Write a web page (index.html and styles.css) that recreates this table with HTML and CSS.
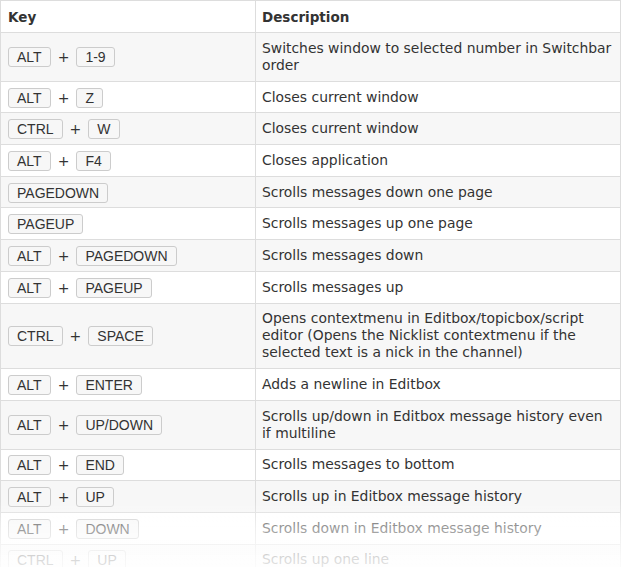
FILE: index.html
```html
<!DOCTYPE html>
<html>
<head>
<meta charset="utf-8">
<link rel="stylesheet" href="styles.css">
</head>
<body>
<table class="keys">
  <thead>
    <tr><th class="col-key">Key</th><th>Description</th></tr>
  </thead>
  <tbody>
    <tr><td><div class="combo"><kbd>ALT</kbd><span class="plus">+</span><kbd>1-9</kbd></div></td><td>Switches window to selected number in Switchbar order</td></tr>
    <tr><td><div class="combo"><kbd>ALT</kbd><span class="plus">+</span><kbd>Z</kbd></div></td><td>Closes current window</td></tr>
    <tr><td><div class="combo"><kbd>CTRL</kbd><span class="plus">+</span><kbd>W</kbd></div></td><td>Closes current window</td></tr>
    <tr><td><div class="combo"><kbd>ALT</kbd><span class="plus">+</span><kbd>F4</kbd></div></td><td>Closes application</td></tr>
    <tr><td><div class="combo"><kbd>PAGEDOWN</kbd></div></td><td>Scrolls messages down one page</td></tr>
    <tr><td><div class="combo"><kbd>PAGEUP</kbd></div></td><td>Scrolls messages up one page</td></tr>
    <tr><td><div class="combo"><kbd>ALT</kbd><span class="plus">+</span><kbd>PAGEDOWN</kbd></div></td><td>Scrolls messages down</td></tr>
    <tr><td><div class="combo"><kbd>ALT</kbd><span class="plus">+</span><kbd>PAGEUP</kbd></div></td><td>Scrolls messages up</td></tr>
    <tr><td><div class="combo"><kbd>CTRL</kbd><span class="plus">+</span><kbd>SPACE</kbd></div></td><td>Opens contextmenu in Editbox/topicbox/script editor (Opens the Nicklist contextmenu if the selected text is a nick in the channel)</td></tr>
    <tr><td><div class="combo"><kbd>ALT</kbd><span class="plus">+</span><kbd>ENTER</kbd></div></td><td>Adds a newline in Editbox</td></tr>
    <tr><td><div class="combo"><kbd>ALT</kbd><span class="plus">+</span><kbd>UP/DOWN</kbd></div></td><td>Scrolls up/down in Editbox message history even if multiline</td></tr>
    <tr><td><div class="combo"><kbd>ALT</kbd><span class="plus">+</span><kbd>END</kbd></div></td><td>Scrolls messages to bottom</td></tr>
    <tr><td><div class="combo"><kbd>ALT</kbd><span class="plus">+</span><kbd>UP</kbd></div></td><td>Scrolls up in Editbox message history</td></tr>
    <tr><td><div class="combo"><kbd>ALT</kbd><span class="plus">+</span><kbd>DOWN</kbd></div></td><td>Scrolls down in Editbox message history</td></tr>
    <tr><td><div class="combo"><kbd>CTRL</kbd><span class="plus">+</span><kbd>UP</kbd></div></td><td>Scrolls up one line</td></tr>
  </tbody>
</table>
<div class="fade"></div>
</body>
</html>
```
FILE: styles.css
```css
html, body {
  margin: 0;
  padding: 0;
  background: #fff;
  overflow: hidden;
}
body {
  font-family: "DejaVu Sans", Verdana, sans-serif;
  font-size: 13.9px;
  color: #333;
}
.keys {
  border-collapse: collapse;
  width: 621px;
}
.keys th, .keys td {
  border: 1px solid #ddd;
  text-align: left;
  vertical-align: middle;
  line-height: 17px;
  padding: 6.85px 6px;
}
.keys th {
  font-size: 13.5px;
  font-weight: bold;
  background: #fff;
  padding-top: 7.5px;
  padding-bottom: 6.5px;
}
.keys td:first-child, .keys th:first-child {
  padding-left: 7px;
  width: 241px;
}
.keys td:first-child {
  padding-top: 4px;
  padding-bottom: 4px;
}
.keys tbody tr:nth-child(odd) td {
  background: #f7f7f7;
}
.keys tbody tr:nth-child(even) td {
  background: #fff;
}
.combo {
  display: flex;
  align-items: center;
  padding-top: 1px;
}
kbd {
  display: block;
  font-family: "Liberation Sans", Arial, sans-serif;
  font-size: 14px;
  line-height: 16px;
  padding: 1px 8px 1px 8px;
  border: 1px solid #ccc;
  border-radius: 3px;
  background: #f7f7f7;
  color: #333;
}
.plus {
  display: block;
  margin: 0 7px;
  font-size: 14px;
  line-height: 16px;
}
.fade {
  position: fixed;
  left: 0;
  right: 0;
  bottom: 0;
  height: 67px;
  background: linear-gradient(to bottom, rgba(255,255,255,0) 0%, rgba(255,255,255,0.5) 40%, rgba(255,255,255,0.82) 88%, rgba(255,255,255,0.86) 100%);
  pointer-events: none;
}
```
